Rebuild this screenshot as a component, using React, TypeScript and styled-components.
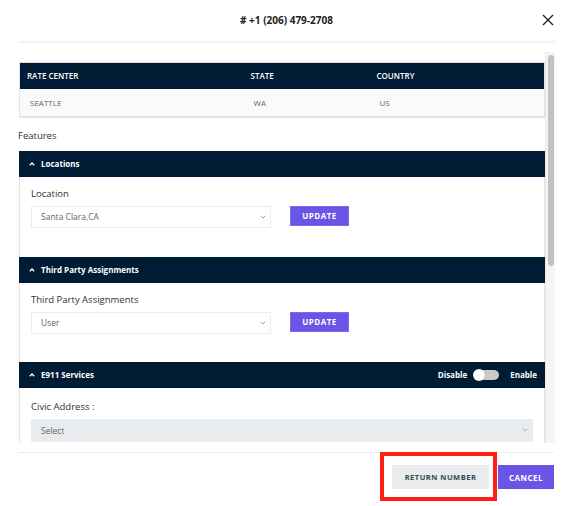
import React from "react";
import styled, { createGlobalStyle } from "styled-components";

const Global = createGlobalStyle`
  * { box-sizing: border-box; }
  html, body { margin: 0; padding: 0; background: #fff; }
  body { font-family: "Open Sans", "Liberation Sans", sans-serif; color: #333; }
`;

const NAVY = "#001b34";
const PURPLE = "#6b55e6";

const Modal = styled.div`
  width: 572px;
  height: 506px;
  background: #fff;
  display: flex;
  flex-direction: column;
`;

const Header = styled.div`
  height: 43px;
  margin: 0 17px 0 18px;
  display: grid;
  grid-template-columns: 1fr auto 1fr;
  align-items: center;
  border-bottom: 2px solid #f3f3f3;
  padding-bottom: 2px;
`;

const Title = styled.div`
  grid-column: 2;
  font-size: 10px;
  font-weight: 700;
  color: #222;
`;

const Close = styled.button`
  grid-column: 3;
  justify-self: end;
  background: none;
  border: none;
  padding: 0;
  width: 14px;
  height: 14px;
  display: flex;
  align-items: center;
  justify-content: center;
  cursor: pointer;
`;

const ScrollArea = styled.div`
  margin: 9px 17px 0 18px;
  height: 391px;
  display: flex;
`;

const Content = styled.div`
  flex: 1;
  min-width: 0;
  overflow: hidden;
  padding: 10px 0 0 1px;
`;

const ScrollTrack = styled.div`
  width: 10px;
  background: #f5f5f5;
  border-left: 1px solid #e9e9e9;
  padding: 3px 1px 0 2px;
`;

const ScrollThumb = styled.div<{ $h: number }>`
  height: ${(p) => p.$h}px;
  background: #c2c2c2;
  border-radius: 3px;
`;

const Table = styled.table`
  width: 100%;
  table-layout: fixed;
  border-collapse: collapse;
  border: 1px solid #e2e2e2;
  font-size: 8px;
`;

const Th = styled.th<{ $w?: number }>`
  background: ${NAVY};
  color: #fff;
  text-align: left;
  font-weight: 600;
  height: 26px;
  padding: 0 0 0 7px;
  width: ${(p) => (p.$w ? `${p.$w}px` : "auto")};
`;

const Td = styled.td`
  background: #fafafa;
  color: #666;
  height: 28px;
  padding: 0 0 0 10px;
  border-bottom: 2px solid #e6e6e6;
`;

const SectionLabel = styled.div`
  font-size: 9.5px;
  color: #333;
  margin: 11px 0 9px -1px;
`;

const Panel = styled.div``;

const PanelHead = styled.div`
  background: ${NAVY};
  height: 26px;
  display: flex;
  align-items: center;
  padding: 0 8px 0 10px;
  color: #fff;
  font-size: 8px;
  font-weight: 700;
`;

const HeadTitle = styled.div`
  display: flex;
  align-items: center;
  gap: 6px;
  flex: 1;
`;

const PanelBody = styled.div<{ $pt?: number; $pb: number }>`
  border-left: 1px solid #e4e4e4;
  border-right: 1px solid #e4e4e4;
  padding: ${(p) => p.$pt ?? 11}px 11px ${(p) => p.$pb}px 11px;
`;

const Label = styled.div`
  font-size: 9.5px;
  color: #333;
  line-height: 12px;
  margin-bottom: 6px;
`;

const Row = styled.div`
  display: flex;
  align-items: flex-start;
  gap: 19px;
`;

const Select = styled.div<{ $w?: number; $gray?: boolean }>`
  width: ${(p) => (p.$w ? `${p.$w}px` : "100%")};
  height: ${(p) => (p.$gray ? 23 : 22)}px;
  border: 1px solid ${(p) => (p.$gray ? "#e9ecef" : "#ececec")};
  background: ${(p) => (p.$gray ? "#e9ecef" : "#fff")};
  display: flex;
  align-items: center;
  justify-content: space-between;
  padding: 0 4px 0 9px;
  font-size: 8.5px;
  color: #666;
`;

const Button = styled.button<{ $variant?: "primary" | "light" }>`
  border: none;
  font-family: inherit;
  font-weight: 700;
  font-size: 7.5px;
  letter-spacing: 0.5px;
  cursor: pointer;
  padding: 0;
  background: ${(p) => (p.$variant === "light" ? "#e9ebed" : PURPLE)};
  color: ${(p) => (p.$variant === "light" ? "#2f4e50" : "#fff")};
`;

const UpdateButton = styled(Button)`
  width: 59px;
  height: 20px;
  font-size: 8px;
  border: 1px solid #7d6af0;
`;

const ToggleWrap = styled.div`
  display: flex;
  align-items: center;
  gap: 7px;
  font-size: 8px;
  font-weight: 700;
`;

const Track = styled.div`
  width: 25px;
  height: 10px;
  border-radius: 5px;
  background: #c9c9c9;
  position: relative;
  margin: 0 4px 0 0;
`;

const Knob = styled.div`
  position: absolute;
  left: -1px;
  top: -1px;
  width: 12px;
  height: 12px;
  border-radius: 50%;
  background: #fff;
  box-shadow: 0 0 1px rgba(0, 0, 0, 0.4);
`;

const Footer = styled.div`
  margin: 9px 18px 0 18px;
  border-top: 1px solid #ececec;
  padding-top: 12px;
  display: flex;
  justify-content: flex-end;
  gap: 9px;
`;

const Highlight = styled.div`
  position: relative;
  display: flex;
  &::after {
    content: "";
    position: absolute;
    left: -12px;
    right: -8px;
    top: -13px;
    bottom: -12px;
    border: 4px solid #ff2018;
    pointer-events: none;
  }
`;

const ReturnButton = styled(Button)`
  width: 97px;
  height: 24px;
`;

const CancelButton = styled(Button)`
  width: 56px;
  height: 24px;
  font-size: 8px;
`;

const Chevron = ({ color = "#888" }: { color?: string }) => (
  <svg width="6" height="4" viewBox="0 0 6 4">
    <path d="M0.8 0.8 L3 3 L5.2 0.8" fill="none" stroke={color} strokeWidth="0.8" />
  </svg>
);

const Up = () => (
  <svg width="6" height="4" viewBox="0 0 6 4">
    <path d="M0.8 3.3 L3 1 L5.2 3.3" fill="none" stroke="#fff" strokeWidth="1.3" />
  </svg>
);

export default function App() {
  return (
    <>
      <Global />
      <Modal>
        <Header>
          <Title># +1 (206) 479-2708</Title>
          <Close aria-label="close">
            <svg width="12" height="12" viewBox="0 0 12 12">
              <path d="M1 1 L11 11 M11 1 L1 11" stroke="#222" strokeWidth="1.4" />
            </svg>
          </Close>
        </Header>
        <ScrollArea>
          <Content>
            <Table>
              <thead>
                <tr>
                  <Th $w={224}>RATE CENTER</Th>
                  <Th $w={126}>STATE</Th>
                  <Th>COUNTRY</Th>
                </tr>
              </thead>
              <tbody>
                <tr>
                  <Td>SEATTLE</Td>
                  <Td>WA</Td>
                  <Td>US</Td>
                </tr>
              </tbody>
            </Table>
            <SectionLabel>Features</SectionLabel>
            <Panel>
              <PanelHead>
                <HeadTitle>
                  <Up />
                  Locations
                </HeadTitle>
              </PanelHead>
              <PanelBody $pb={29}>
                <Label>Location</Label>
                <Row>
                  <Select $w={240}>
                    Santa Clara,CA
                    <Chevron />
                  </Select>
                  <UpdateButton>UPDATE</UpdateButton>
                </Row>
              </PanelBody>
            </Panel>
            <Panel>
              <PanelHead>
                <HeadTitle>
                  <Up />
                  Third Party Assignments
                </HeadTitle>
              </PanelHead>
              <PanelBody $pb={28}>
                <Label>Third Party Assignments</Label>
                <Row>
                  <Select $w={240}>
                    User
                    <Chevron />
                  </Select>
                  <UpdateButton>UPDATE</UpdateButton>
                </Row>
              </PanelBody>
            </Panel>
            <Panel>
              <PanelHead>
                <HeadTitle>
                  <Up />
                  E911 Services
                </HeadTitle>
                <ToggleWrap>
                  Disable
                  <Track>
                    <Knob />
                  </Track>
                  Enable
                </ToggleWrap>
              </PanelHead>
              <PanelBody $pt={13} $pb={20}>
                <Label>Civic Address :</Label>
                <Select $gray>
                  Select
                  <Chevron color="#999" />
                </Select>
              </PanelBody>
            </Panel>
          </Content>
          <ScrollTrack>
            <ScrollThumb $h={211} />
          </ScrollTrack>
        </ScrollArea>
        <Footer>
          <Highlight>
            <ReturnButton $variant="light">RETURN NUMBER</ReturnButton>
          </Highlight>
          <CancelButton>CANCEL</CancelButton>
        </Footer>
      </Modal>
    </>
  );
}
